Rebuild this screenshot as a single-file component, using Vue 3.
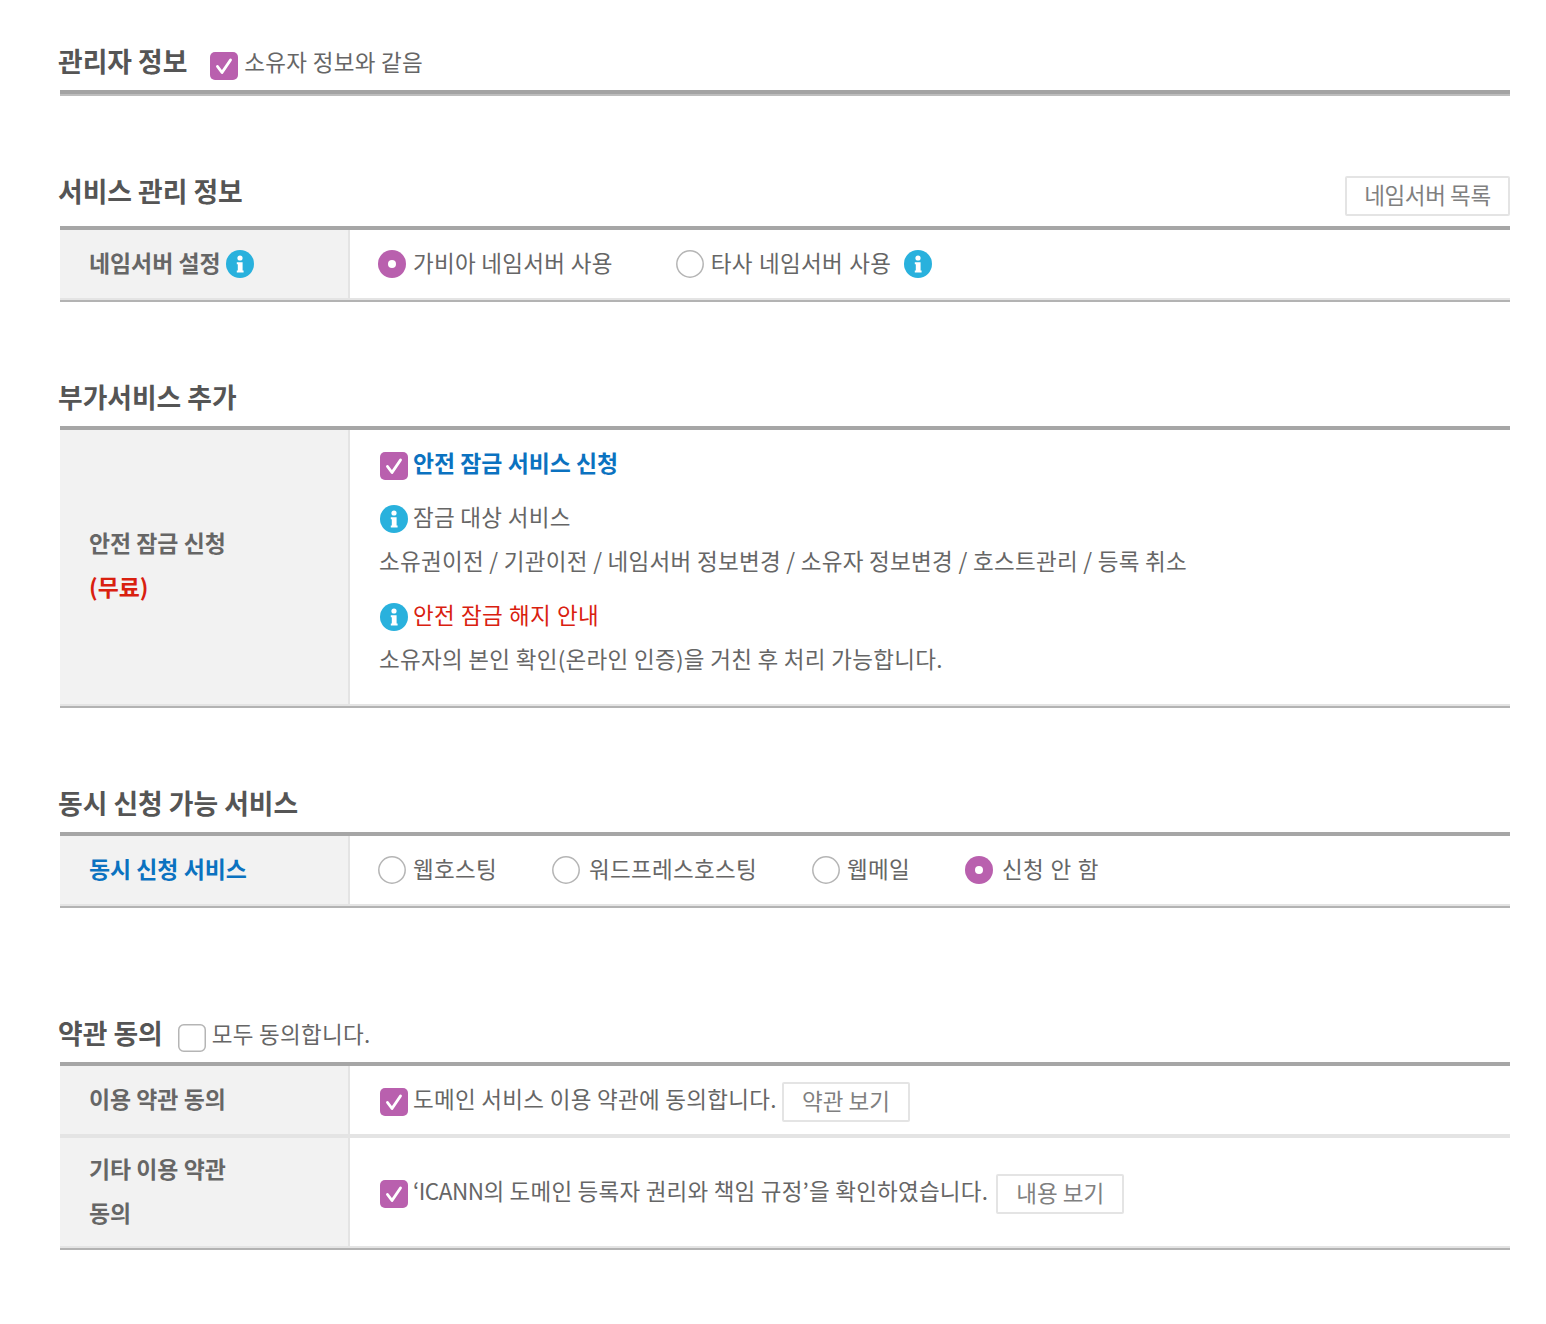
<script setup>
const CHECK = 'M7.5 14.5 L12 20.5 L20.5 8';
const INFO_STEM = 'M10.8 12.2 H16.6 V20.6 H17.6 V22.6 H10.8 V20.6 H11.8 V14.2 H10.8 Z';
const options = [
  { label: '웹호스팅', on: false },
  { label: '워드프레스호스팅', on: false },
  { label: '웹메일', on: false },
  { label: '신청 안 함', on: true },
];
</script>

<template>
  <div class="page">
    <section class="first">
      <div class="head">
        <h2>관리자 정보</h2>
        <label class="all-agree owner">
          <svg class="box" viewBox="0 0 28 28"><rect width="28" height="28" rx="5" fill="#b960ae"/><path :d="CHECK" fill="none" stroke="#fff" stroke-width="2.9" stroke-linecap="round" stroke-linejoin="round"/></svg>
          <span>소유자 정보와 같음</span>
        </label>
      </div>
      <div class="thick"></div>
    </section>

    <section>
      <div class="head with-btn">
        <h2>서비스 관리 정보</h2>
        <button class="btn wide">네임서버 목록</button>
      </div>
      <div class="table">
        <div class="row h68">
          <div class="th">네임서버 설정
            <svg class="info th-info" viewBox="0 0 28 28"><circle cx="14" cy="14" r="14" fill="#29b1dd"/><circle cx="14" cy="8" r="2.6" fill="#fff"/><path :d="INFO_STEM" fill="#fff"/></svg>
          </div>
          <div class="td opts first-opts">
            <label class="opt">
              <svg class="radio" viewBox="0 0 28 28"><circle cx="14" cy="14" r="14" fill="#b960ae"/><circle cx="14" cy="14" r="4" fill="#fff"/></svg>
              <span>가비아 네임서버 사용</span>
            </label>
            <label class="opt">
              <svg class="radio" viewBox="0 0 28 28"><circle cx="14" cy="14" r="13.2" fill="#fff" stroke="#b5b5b5" stroke-width="1.5"/></svg>
              <span class="other">타사 네임서버 사용</span>
              <svg class="info after" viewBox="0 0 28 28"><circle cx="14" cy="14" r="14" fill="#29b1dd"/><circle cx="14" cy="8" r="2.6" fill="#fff"/><path :d="INFO_STEM" fill="#fff"/></svg>
            </label>
          </div>
        </div>
      </div>
    </section>

    <section>
      <div class="head"><h2>부가서비스 추가</h2></div>
      <div class="table">
        <div class="row">
          <div class="th stacked lock">
            <div>안전 잠금 신청</div>
            <div class="red">(무료)</div>
          </div>
          <div class="td lines">
            <div class="line">
              <svg class="box" viewBox="0 0 28 28"><rect width="28" height="28" rx="5" fill="#b960ae"/><path :d="CHECK" fill="none" stroke="#fff" stroke-width="2.9" stroke-linecap="round" stroke-linejoin="round"/></svg>
              <strong class="blue">안전 잠금 서비스 신청</strong>
            </div>
            <div class="line gap">
              <svg class="info" viewBox="0 0 28 28"><circle cx="14" cy="14" r="14" fill="#29b1dd"/><circle cx="14" cy="8" r="2.6" fill="#fff"/><path :d="INFO_STEM" fill="#fff"/></svg>
              <span>잠금 대상 서비스</span>
            </div>
            <p>소유권이전 / 기관이전 / 네임서버 정보변경 / 소유자 정보변경 / 호스트관리 / 등록 취소</p>
            <div class="line gap">
              <svg class="info" viewBox="0 0 28 28"><circle cx="14" cy="14" r="14" fill="#29b1dd"/><circle cx="14" cy="8" r="2.6" fill="#fff"/><path :d="INFO_STEM" fill="#fff"/></svg>
              <span class="red-text">안전 잠금 해지 안내</span>
            </div>
            <p>소유자의 본인 확인(온라인 인증)을 거친 후 처리 가능합니다.</p>
          </div>
        </div>
      </div>
    </section>

    <section>
      <div class="head"><h2>동시 신청 가능 서비스</h2></div>
      <div class="table">
        <div class="row h68">
          <div class="th blue">동시 신청 서비스</div>
          <div class="td opts many">
            <label v-for="o in options" :key="o.label" class="opt">
              <svg v-if="o.on" class="radio" viewBox="0 0 28 28"><circle cx="14" cy="14" r="14" fill="#b960ae"/><circle cx="14" cy="14" r="4" fill="#fff"/></svg>
              <svg v-else class="radio" viewBox="0 0 28 28"><circle cx="14" cy="14" r="13.2" fill="#fff" stroke="#b5b5b5" stroke-width="1.5"/></svg>
              <span>{{ o.label }}</span>
            </label>
          </div>
        </div>
      </div>
    </section>

    <section class="terms">
      <div class="head">
        <h2>약관 동의</h2>
        <label class="all-agree terms-all">
          <svg class="box" viewBox="0 0 28 28"><rect x=".75" y=".75" width="26.5" height="26.5" rx="5" fill="#fff" stroke="#b5b5b5" stroke-width="1.5"/></svg>
          <span>모두 동의합니다.</span>
        </label>
      </div>
      <div class="table">
        <div class="row h68 divided">
          <div class="th">이용 약관 동의</div>
          <div class="td agree">
            <svg class="box" viewBox="0 0 28 28"><rect width="28" height="28" rx="5" fill="#b960ae"/><path :d="CHECK" fill="none" stroke="#fff" stroke-width="2.9" stroke-linecap="round" stroke-linejoin="round"/></svg>
            <span>도메인 서비스 이용 약관에 동의합니다.</span>
            <button class="btn near">약관 보기</button>
          </div>
        </div>
        <div class="row h108">
          <div class="th stacked">
            <div>기타 이용 약관</div>
            <div>동의</div>
          </div>
          <div class="td agree">
            <svg class="box" viewBox="0 0 28 28"><rect width="28" height="28" rx="5" fill="#b960ae"/><path :d="CHECK" fill="none" stroke="#fff" stroke-width="2.9" stroke-linecap="round" stroke-linejoin="round"/></svg>
            <span class="icann"><span class="latin">‘ICANN</span>의 도메인 등록자 권리와 책임 규정’을 확인하였습니다.</span>
            <button class="btn far">내용 보기</button>
          </div>
        </div>
      </div>
    </section>
  </div>
</template>

<style>
html, body { background: #fff; }
</style>

<style scoped>
.page {
  width: 1450px;
  padding: 46px 36px 74px 60px;
  font-family: "Noto Sans CJK KR", "Noto Sans", sans-serif;
  font-size: 22.5px;
  letter-spacing: .3px;
  line-height: 44px;
  color: #666;
}
section { margin-top: 80px; }
section.first { margin-top: 0; }
section.terms { margin-top: 110px; }
.head {
  display: flex;
  align-items: flex-start;
  padding-bottom: 14px;
}
.head.with-btn { justify-content: space-between; padding-bottom: 10px; }
h2 {
  margin: 0 0 0 -2px;
  font-size: 26.8px;
  letter-spacing: 0;
  line-height: 30px;
  font-weight: 700;
  color: #555;
}
.thick {
  height: 6px;
  background: linear-gradient(#a3a3a3 0 4px, #bdbdbd 4px);
}
.all-agree { display: flex; align-items: center; height: 30px; }
.owner { margin-left: 23px; }
.owner .box { margin-right: 6px !important; }
.terms-all { margin-left: 15px; }
.all-agree .box { margin: 10px 6px 0 0; }
.box, .radio, .info { width: 28px; height: 28px; flex: none; display: block; }
.table {
  border-top: 4px solid #a6a6a6;
  border-bottom: 2px solid #b3b3b3;
}
.row {
  display: flex;
  border-bottom: 2px solid #e4e4e4;
}
.h68 { min-height: 68px; }
.h108 { min-height: 108px; }
.row.divided { border-bottom-width: 4px; }
.th {
  width: 288px;
  box-sizing: border-box;
  flex: none;
  padding: 0 0 4px 29px;
  background: #f2f2f2;
  font-size: 22.9px;
  letter-spacing: 0;
  font-weight: 700;
  color: #666;
  display: flex;
  align-items: center;
}
.th.stacked { flex-direction: column; align-items: flex-start; justify-content: center; }
.th.lock { padding-bottom: 6px; }
.th-info { margin: 4px 0 0 5px; }
.td {
  flex: 1;
  border-left: 2px solid #e4e4e4;
  padding-left: 28px;
}
.opts { display: flex; align-items: center; gap: 55px; }
.first-opts { gap: 63px; }
.opt { display: flex; align-items: center; gap: 7px; }
.many .opt:nth-child(even) { gap: 9px; }
.many .opt:last-child span { word-spacing: 1px; }
.opt span { margin-top: -4px; }
.opt .other { word-spacing: 1px; }
.opt .after { margin: 0 0 0 6px; }
.lines { padding: 10px 0 24px 29px; }
.line { display: flex; align-items: center; gap: 5px; margin-left: 1px; }
.line .box { margin-top: 8px; }
.line .info { margin-top: 6px; }
.gap { margin-top: 10px; }
p { margin: 0; }
.blue { color: #0b72c0; font-weight: 700; font-size: 22.9px; letter-spacing: 0; }
.red { color: #d9200f; font-weight: 700; }
.red-text { color: #d9200f; word-spacing: .7px; }
.agree { display: flex; align-items: center; padding-left: 30px; }
.agree > .box { margin-top: 4px; margin-right: 5px; }
.agree > span { margin-top: -4px; }
.icann { letter-spacing: .22px; }
.latin { letter-spacing: -.5px; }
.agree > .near { margin: 4px 0 0 5px; }
.agree > .far { margin: 4px 0 0 8px; }
.btn {
  box-sizing: border-box;
  width: 128px;
  height: 40px;
  padding: 0 0 4px;
  background: #fff;
  border: 2px solid #e4e4e4;
  border-radius: 2px;
  font: inherit;
  line-height: 32px;
  color: #808080;
}
.btn.wide { width: 165px; letter-spacing: -.4px; }
</style>
